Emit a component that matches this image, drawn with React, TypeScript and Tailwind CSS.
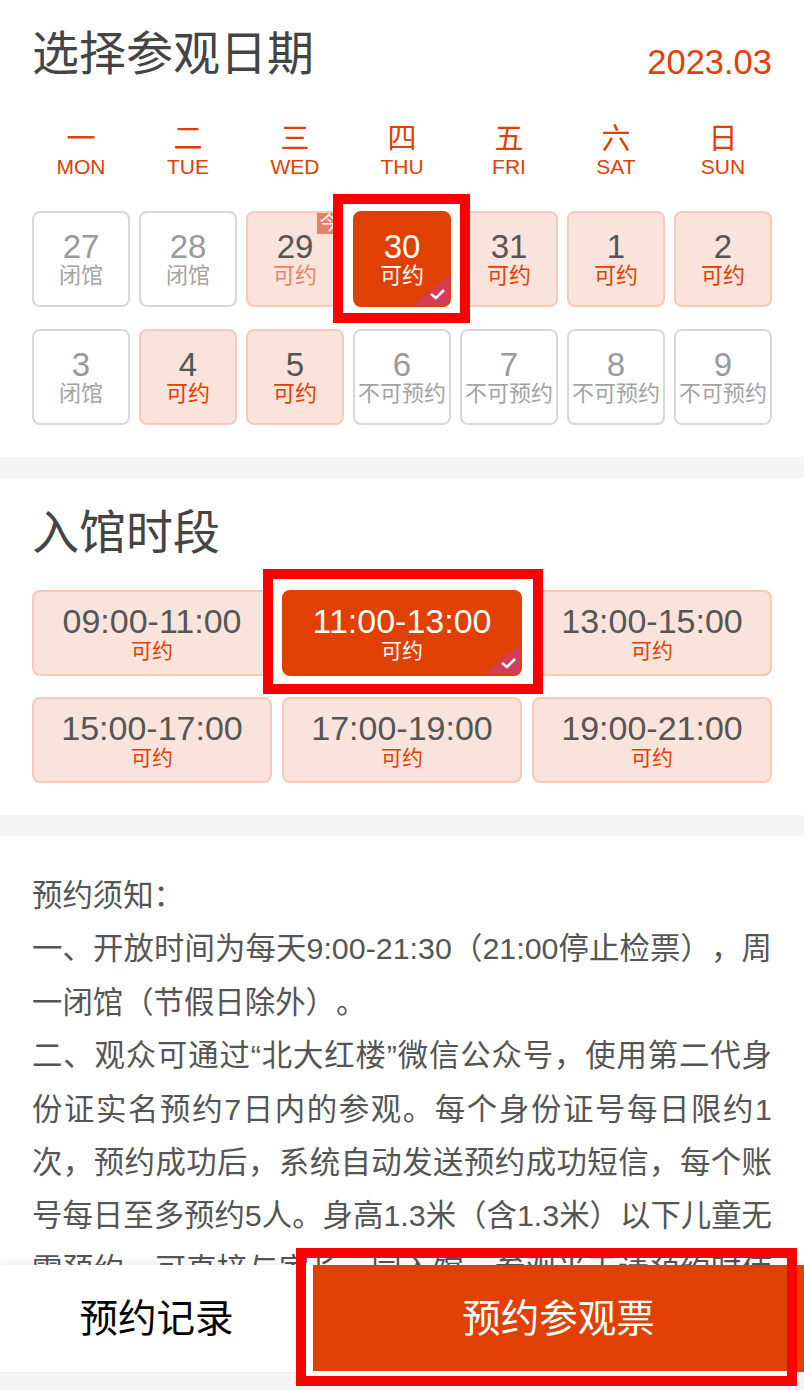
const font = { fontFamily: '"Liberation Sans","Noto Sans CJK SC",sans-serif' };

type D = { n: string; t: string; k: 'off' | 'on' | 'sel' | 'today' };

const days: D[] = [
  { n: '27', t: '闭馆', k: 'off' },
  { n: '28', t: '闭馆', k: 'off' },
  { n: '29', t: '可约', k: 'today' },
  { n: '30', t: '可约', k: 'sel' },
  { n: '31', t: '可约', k: 'on' },
  { n: '1', t: '可约', k: 'on' },
  { n: '2', t: '可约', k: 'on' },
  { n: '3', t: '闭馆', k: 'off' },
  { n: '4', t: '可约', k: 'on' },
  { n: '5', t: '可约', k: 'on' },
  { n: '6', t: '不可预约', k: 'off' },
  { n: '7', t: '不可预约', k: 'off' },
  { n: '8', t: '不可预约', k: 'off' },
  { n: '9', t: '不可预约', k: 'off' },
];

const weeks = [
  ['一', 'MON'],
  ['二', 'TUE'],
  ['三', 'WED'],
  ['四', 'THU'],
  ['五', 'FRI'],
  ['六', 'SAT'],
  ['日', 'SUN'],
];

const times = ['09:00-11:00', '11:00-13:00', '13:00-15:00', '15:00-17:00', '17:00-19:00', '19:00-21:00'];

function Corner() {
  return (
    <svg className="absolute right-0 bottom-0" width="36" height="29" viewBox="0 0 36 29">
      <polygon points="36,0 36,29 0,29" fill="#d43d5a" />
      <polyline points="18,18 23,22 31,14" fill="none" stroke="#ffffff" strokeWidth="2.6" />
    </svg>
  );
}

function DayCard({ d }: { d: D }) {
  const sel = d.k === 'sel';
  const off = d.k === 'off';
  const boxCls = sel
    ? 'bg-[#e04002] border-[#e04002] z-20'
    : off
      ? 'bg-white border-[#d8d8d8]'
      : 'bg-[#fae3da] border-[#f6c9b9]';
  const numCls = sel ? 'text-white' : off ? 'text-[#9a9a9a]' : 'text-[#555555]';
  const labCls = sel
    ? 'text-white'
    : off
      ? 'text-[#a3a3a3]'
      : d.k === 'today'
        ? 'text-[#e8836c]'
        : 'text-[#e04002]';
  return (
    <div className="relative">
      {sel && <div className="absolute -left-[20px] -right-[19px] -top-[17px] -bottom-[16px] z-10 bg-white border-[10px] border-[#ff0000]" />}
      <div className={`relative h-[96px] rounded-[8px] border-2 overflow-hidden flex flex-col items-center justify-center ${boxCls}`}>
        <div className={`text-[33px] leading-[33px] ${numCls}`}>{d.n}</div>
        <div className={`text-[22px] leading-[25px] whitespace-nowrap ${labCls}`}>{d.t}</div>
        {sel && <Corner />}
      </div>
      {d.k === 'today' && (
        <div className="absolute right-[3px] top-[2px] w-[24px] h-[21px] bg-[#e8806a] text-white text-[19px] leading-[21px] text-center">今</div>
      )}
    </div>
  );
}

function TimeCard({ t, sel }: { t: string; sel: boolean }) {
  return (
    <div className="relative">
      {sel && <div className="absolute -left-[19px] -right-[21px] -top-[21px] -bottom-[18px] z-10 bg-white border-[10px] border-[#ff0000]" />}
      <div
        className={`relative h-[86px] rounded-[8px] border-2 overflow-hidden flex flex-col items-center justify-center ${
          sel ? 'bg-[#e04002] border-[#e04002] z-20' : 'bg-[#fae3da] border-[#f6c9b9]'
        }`}
      >
        <div className={`text-[34px] leading-[36px] ${sel ? 'text-white' : 'text-[#555555]'}`}>{t}</div>
        <div className={`text-[21px] leading-[24px] ${sel ? 'text-white' : 'text-[#e04002]'}`}>可约</div>
        {sel && <Corner />}
      </div>
    </div>
  );
}

export default function App() {
  return (
    <div lang="zh-CN" style={font} className="relative w-[804px] h-[1390px] overflow-hidden flex flex-col bg-[#f5f5f5]">
      <div className="flex-1 min-h-0 overflow-hidden">
        <section className="h-[457px] bg-white px-8 pt-[22px]">
          <div className="flex justify-between h-[64px]">
            <h1 className="text-[47px] leading-[64px] text-[#444444]">选择参观日期</h1>
            <div className="text-[34.5px] leading-[40px] mt-[20px] text-[#e04002]">2023.03</div>
          </div>
          <div className="grid grid-cols-7 gap-x-[9px] mt-[37px] text-[#e04002] text-center">
            {weeks.map(([a, b]) => (
              <div key={b}>
                <div className="text-[29px] leading-[32px]">{a}</div>
                <div className="text-[21px] leading-[24px]">{b}</div>
              </div>
            ))}
          </div>
          <div className="grid grid-cols-7 gap-x-[9px] gap-y-[22px] mt-[32px]">
            {days.map((d) => (
              <DayCard key={d.n} d={d} />
            ))}
          </div>
        </section>

        <section className="h-[337px] mt-[21px] bg-white px-8 pt-[23px]">
          <h2 className="text-[47px] leading-[64px] text-[#444444]">入馆时段</h2>
          <div className="grid grid-cols-3 gap-x-[10px] gap-y-[21px] mt-[25px]">
            {times.map((t) => (
              <TimeCard key={t} t={t} sel={t === '11:00-13:00'} />
            ))}
          </div>
        </section>

        <section className="mt-[21px] bg-white px-8 pt-[33px] text-[30.4px] leading-[53.4px] text-[#555555] text-justify [text-spacing-trim:space-all]">
          <p>预约须知：</p>
          <p>一、开放时间为每天9:00-21:30（21:00停止检票），周一闭馆（节假日除外）。</p>
          <p>
            二、观众可通过“北大红楼”微信公众号，使用第二代身份证实名预约7日内的参观。每个身份证号每日限约1次，预约成功后，系统自动发送预约成功短信，每个账号每日至多预约5人。身高1.3米（含1.3米）以下儿童无需预约，可直接与家长一同入馆，参观当天请预约时使用的身份证入馆。
          </p>
        </section>
      </div>

      <footer className="h-[107px] shrink-0 flex bg-white shadow-[0_-4px_8px_rgba(0,0,0,0.05)] relative">
        <button className="w-[313px] text-[38.5px] text-black">预约记录</button>
        <button className="flex-1 bg-[#e04002] text-[38.5px] text-white">预约参观票</button>
      </footer>
      <div className="h-[18px] shrink-0 border-t border-[#eeeeee] bg-[#f5f5f5]" />

      <div className="absolute left-[296px] top-[1248px] w-[501px] h-[138px] border-[10px] border-[#ff0000] flex flex-col justify-end">
        <div className="h-[5px] bg-white" />
      </div>
    </div>
  );
}
